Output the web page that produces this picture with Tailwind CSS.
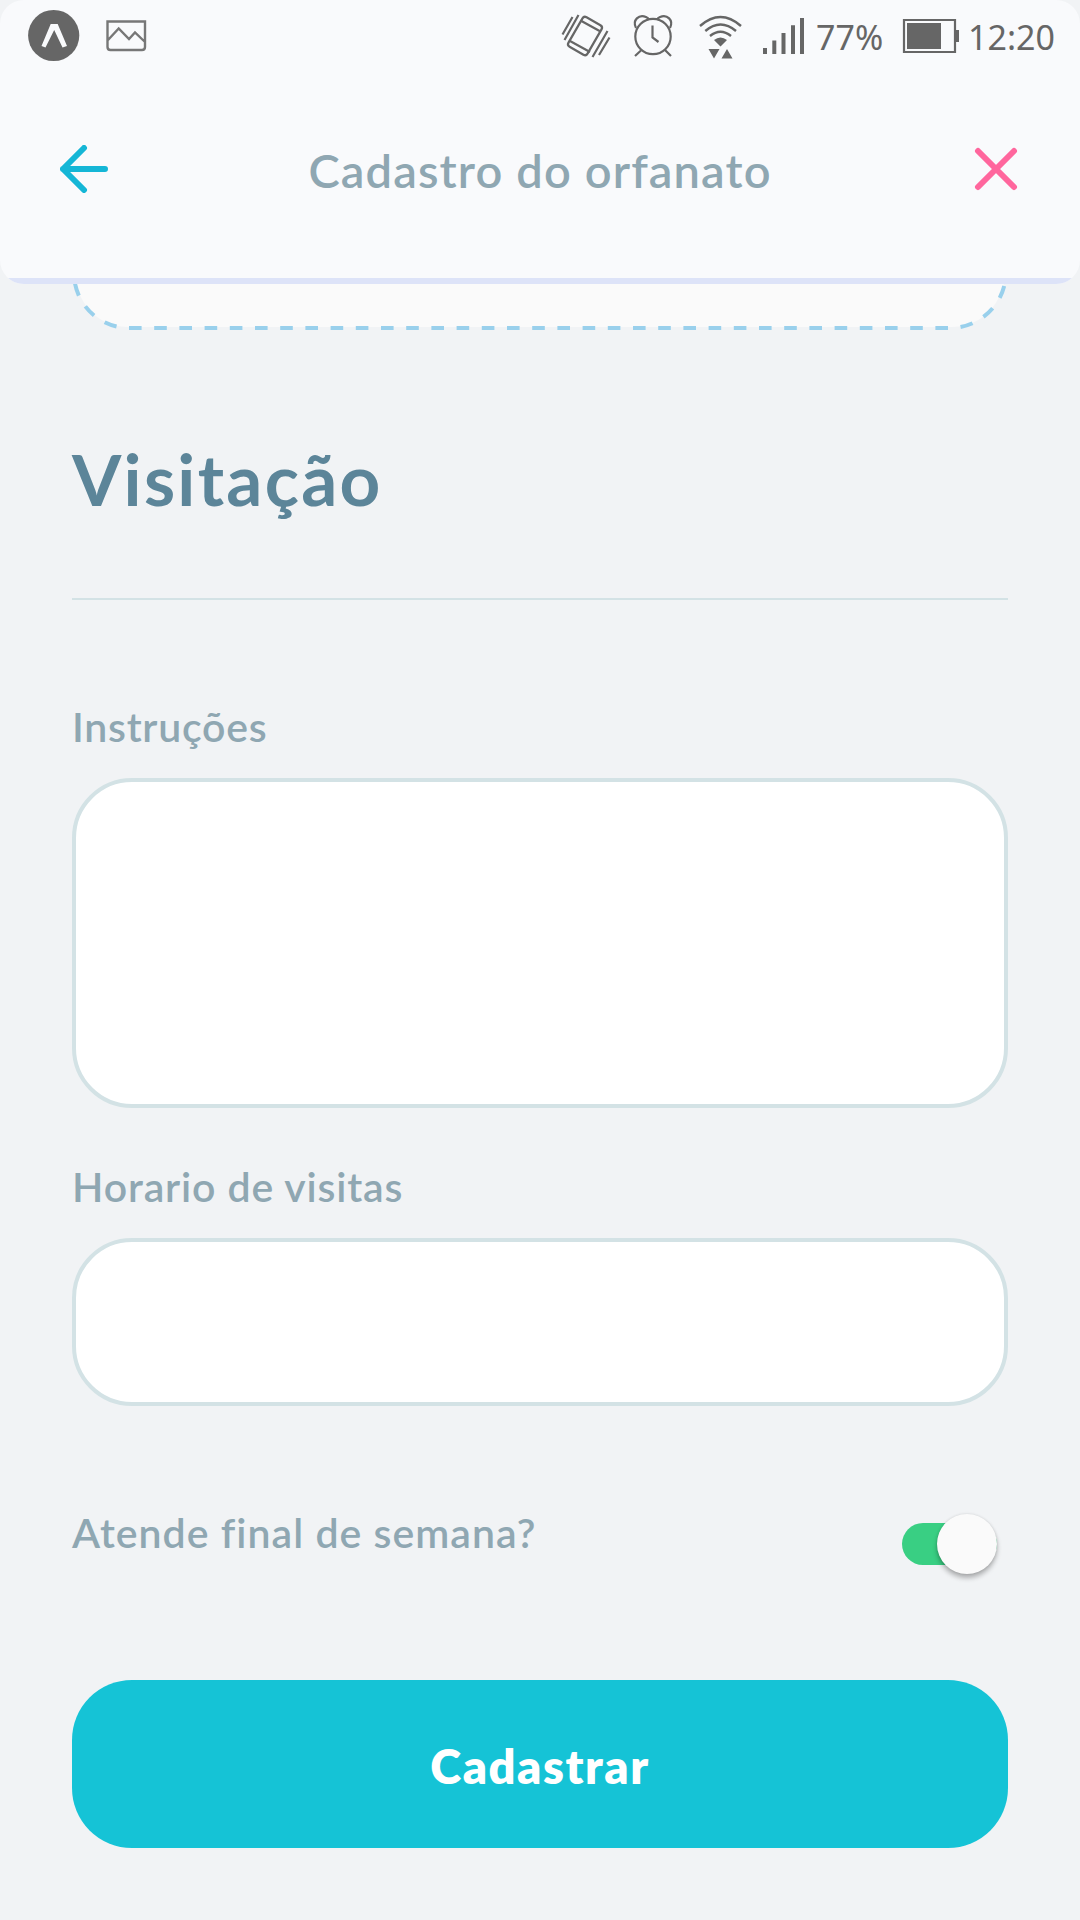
<!DOCTYPE html>
<html lang="pt-BR">
<head>
<meta charset="utf-8">
<title>Cadastro do orfanato</title>
<script src="https://cdn.jsdelivr.net/npm/@tailwindcss/browser@4"></script>
</head>
<body class="w-[1080px] h-[1920px] overflow-hidden bg-[#f1f3f5] font-['Lato',sans-serif] text-[#8fa7b2]">
<header class="flex h-[284px] flex-col overflow-hidden rounded-[24px] bg-[#f9fafc]">
  <!-- status bar -->
  <div class="flex h-[72px] items-start text-[#666]">
    <svg class="h-[72px] w-[800px] shrink-0" viewBox="0 0 800 72" fill="none" stroke="currentColor">
      <circle cx="53.7" cy="35.5" r="25.6" fill="currentColor" stroke="none"/>
      <path d="M41.5 46 50.7 24H57.7L67 46 62.5 47.5 54.2 30 45.5 47.5Z" fill="#f9fafc" stroke="none"/>
      <path d="M107.500 21.500H145V47Q145 50 142 50H110.500Q107.500 50 107.500 47ZM108 40 118.700 28.500 129 39 135 32.500 144.500 41.500" stroke="#777" stroke-width="2.400"/>
      <g stroke-width="2.200">
        <rect x="574" y="19" width="22" height="34" rx="3" transform="rotate(30 585 36)"/>
        <path d="M580.500 20.500 600.500 31.500M570 41 590 52M572.500 17 562.500 34.500M578.500 15 564.500 40M607.500 31 592.500 57M609.500 37.500 599 55"/>
        <circle cx="653" cy="36.500" r="17.700"/>
        <path d="M652.500 25.500V37.500L658.500 42M641.500 50 635 56M665 50 671 56M636 28C632 20 639 14 646 17Q648.500 18.200 649 19.500M670 28C674 20 667 14 660 17Q657.500 18.200 657 19.500"/>
      </g>
      <path d="M700 26Q720.500 8 741 26M705.300 31Q720.500 18 736 31M710 36Q720.500 27.500 731 36" stroke-width="2.400"/>
      <path d="M714 40Q720.500 35 727 40L720.500 46.500ZM708.500 49H719.500L714 58.500ZM721.500 58.500H732.500L727 49Z" fill="currentColor" stroke="none"/>
      <path d="M763 48h4v6h-4zM772.300 40.500h4v13.500h-4zM781.500 33h4v21h-4zM791 25.300h4v28.700h-4z" fill="currentColor" stroke="none"/>
    </svg>
    <svg class="h-[72px] w-[16px] shrink-0" viewBox="0 0 16 72"><path d="M0 18h4v36H0z" fill="#666"/></svg>
    <span class="w-[86px] shrink-0 whitespace-nowrap font-['Noto_Sans'] text-[34px] leading-[74px]">77%</span>
    <svg class="h-[72px] w-[66px] shrink-0" viewBox="902 0 66 72" fill="none" stroke="#666">
      <path d="M904 20H955V52H904Z" stroke-width="2.200"/><path d="M907 23h34v26h-34zM956 30h3v12h-3z" fill="#666" stroke="none"/>
    </svg>
    <span class="whitespace-nowrap font-['Noto_Sans'] text-[34px] leading-[74px]">12:20</span>
  </div>
  <!-- navigation -->
  <div class="flex h-[206px] items-start justify-between px-[60px] pt-[68px]">
    <svg class="mt-[5px] h-12 w-12" viewBox="60 145 48 48" fill="none" stroke="#15b6d6" stroke-width="6" stroke-linecap="round" stroke-linejoin="round"><path d="M105 169H63M84 148 63 169 84 190"/></svg>
    <h1 class="text-[47px] font-semibold leading-[60px] tracking-[0.024em]">Cadastro do orfanato</h1>
    <svg class="mt-[5px] h-12 w-12" viewBox="972 145 48 48" fill="none" stroke="#ff669d" stroke-width="6" stroke-linecap="round"><path d="M978 151 1014 187M1014 151 978 187"/></svg>
  </div>
  <div class="h-[6px] shrink-0 bg-[#dde3f8]"></div>
</header>
<main class="flex flex-col px-[72px]">
  <!-- bottom of the photo picker -->
  <svg class="h-[48px] w-[936px]" viewBox="72 284 936 48" fill="none">
    <path d="M76 284C83 310 102 327 129 327H951C978 327 997 310 1004 284Z" fill="#fafafa"/>
    <path d="M129 328H950A56 56 0 0 0 1006 272" stroke="#99d0ec" stroke-width="4" stroke-dasharray="12.600 12.600"/>
    <path d="M129 328A55 55 0 0 1 74 273" stroke="#99d0ec" stroke-width="4" stroke-dasharray="12.600 12.600" stroke-dashoffset="12.600"/>
  </svg>
  <h2 class="mt-[107px] text-[71px] font-bold leading-[80px] tracking-[0.032em] text-[#5c8599]">Visitação</h2>
  <div class="mt-[79px] h-[2px] bg-[#d3e2e5]"></div>
  <label class="mt-[103px] text-[41px] font-semibold leading-[48px] tracking-[0.018em]">Instruções</label>
  <div class="mt-[27px] h-[330px] rounded-[60px] border-4 border-[#d3e2e5] bg-white"></div>
  <label class="mt-[55px] text-[41px] font-semibold leading-[48px] tracking-[0.021em]">Horario de visitas</label>
  <div class="mt-[27px] h-[168px] rounded-[60px] border-4 border-[#d3e2e5] bg-white"></div>
  <div class="mt-[103px] flex justify-between">
    <label class="text-[41px] font-semibold leading-[48px] tracking-[0.025em]">Atende final de semana?</label>
    <div class="mr-[11px] mt-[14px] flex h-[42px] w-[95px] items-center justify-end rounded-full bg-[#39cf83]">
      <div class="h-[60px] w-[60px] shrink-0 rounded-full bg-[#fafafa] shadow-[0_4px_5px_rgba(0,0,0,0.28),0_0_3px_rgba(0,0,0,0.12)]"></div>
    </div>
  </div>
  <button class="mt-[115px] h-[168px] rounded-[60px] bg-[#15c3d6] pt-[5px] text-[47px] font-extrabold tracking-[0.033em] text-white">Cadastrar</button>
</main>
</body>
</html>
